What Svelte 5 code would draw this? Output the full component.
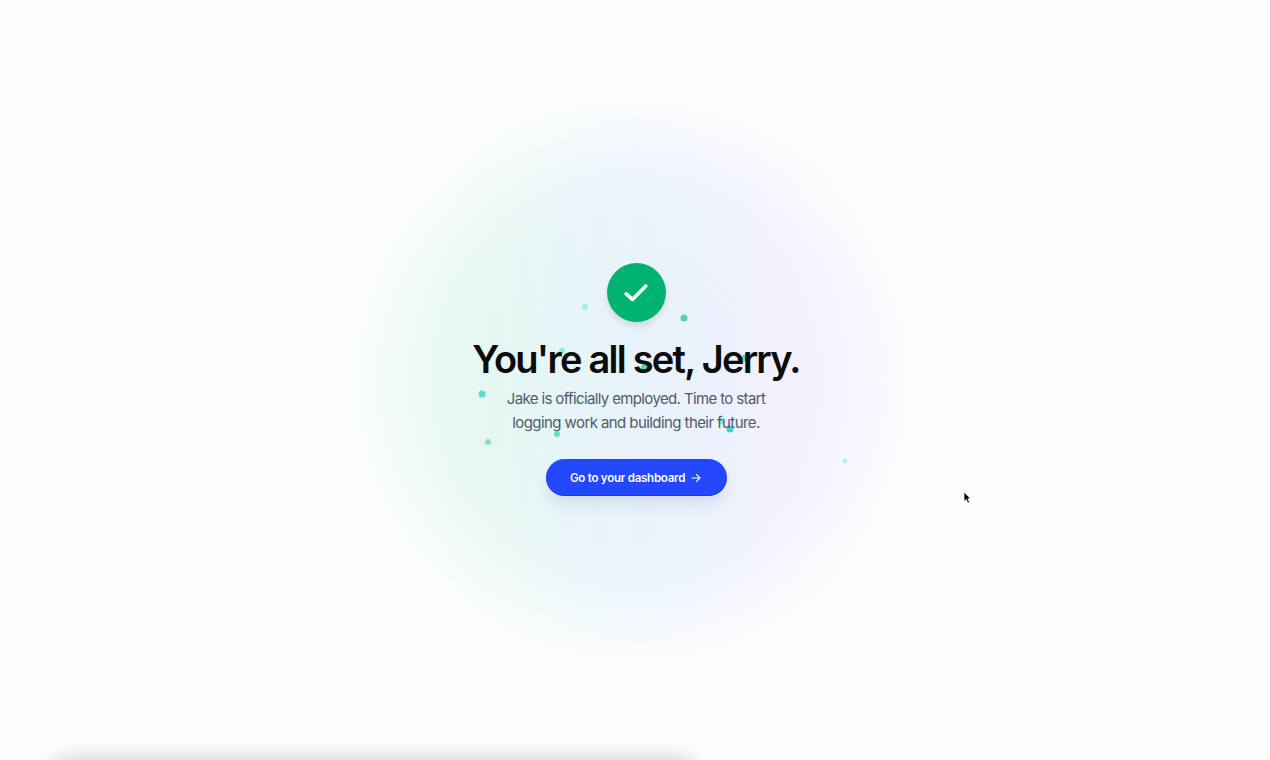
<script>
	let name = 'Jerry'
	let child = 'Jake'

	const confetti = [
		{ x: 584.5, y: 307, size: 6, color: '#a7f0da' },
		{ x: 683.5, y: 318, size: 7, color: '#4ad9a9' },
		{ x: 562, y: 350.5, size: 6, color: '#93e8dc' },
		{ x: 643.5, y: 367, size: 6, color: '#4fdcb6' },
		{ x: 745, y: 358, size: 7, color: '#5edbb8' },
		{ x: 481.5, y: 394, size: 7, color: '#55dfcf' },
		{ x: 577.5, y: 402, size: 5, color: '#a5efdf' },
		{ x: 556.5, y: 434, size: 6, color: '#6fe0bd' },
		{ x: 488, y: 441.5, size: 6, color: '#88dfc0' },
		{ x: 720.5, y: 421, size: 6, color: '#8fe3cf' },
		{ x: 729.5, y: 428.5, size: 7, color: '#3dd6c5' },
		{ x: 844.5, y: 461, size: 5, color: '#baf1e0' }
	]
</script>

<main>
	<div class="glow"></div>

	{#each confetti as dot}
		<span
			class="dot"
			style="left: {dot.x}px; top: {dot.y}px; width: {dot.size}px; height: {dot.size}px; background: {dot.color}"
		></span>
	{/each}

	<section>
		<div class="badge">
			<svg width="30" height="30" viewBox="0 0 30 30" fill="none">
				<path d="M5.2 15.8 L11.4 21.4 L24.8 8" stroke="#fff" stroke-width="3.6" stroke-linecap="round" stroke-linejoin="round" />
			</svg>
		</div>
		<h1>You're all set, {name}.</h1>
		<p>
			<span class="first">{child} is officially employed. Time to start</span>
			<span class="second">logging work and building their future.</span>
		</p>
		<button>
			<span>Go to your dashboard</span>
			<svg width="12" height="12" viewBox="0 0 12 12" fill="none" stroke="#fff" stroke-width="1.1" stroke-linecap="round" stroke-linejoin="round">
				<path d="M2 6 H10 M6.4 2.4 L10 6 L6.4 9.6" />
			</svg>
		</button>
	</section>

	<div class="sheet"></div>

	<svg class="cursor" width="10" height="14" viewBox="0 0 10 14">
		<path d="M1 1 V10.3 L3.2 8.4 L4.8 12.1 L6.5 11.4 L4.9 7.8 H7.6 Z" fill="#000" stroke="#fff" stroke-width="0.7" />
	</svg>
</main>

<style>
	:global(body) {
		margin: 0;
		background: #fefefe;
	}

	main {
		position: relative;
		display: flex;
		justify-content: center;
		align-items: center;
		box-sizing: border-box;
		height: 760px;
		padding: 0 0 1px 2px;
		overflow: hidden;
		font-family: Inter, "Liberation Sans", sans-serif;
	}

	.glow {
		position: absolute;
		left: 392px;
		top: 136px;
		width: 488px;
		height: 488px;
		border-radius: 50%;
		background: linear-gradient(90deg, #e3faeb 0%, #e8f2fc 50%, #f7f0fe 100%);
		filter: blur(48px);
	}

	.dot {
		position: absolute;
		border-radius: 50%;
		transform: translate(-50%, -50%);
	}

	section {
		position: relative;
		display: flex;
		flex-direction: column;
		align-items: center;
	}

	.badge {
		display: flex;
		justify-content: center;
		align-items: center;
		width: 59px;
		height: 59px;
		border-radius: 50%;
		background: #00b371;
		box-shadow: 0 5px 9px -2px rgba(0, 0, 0, 0.14);
	}

	h1 {
		margin: 13px 0 0;
		font-size: 38px;
		line-height: 48px;
		font-weight: 600;
		letter-spacing: -1.75px;
		white-space: nowrap;
		color: #0b0c0c;
	}

	p {
		display: flex;
		flex-direction: column;
		align-items: center;
		margin: 4px 0 0;
		font-size: 15px;
		line-height: 24px;
		letter-spacing: -0.63px;
		white-space: nowrap;
		color: #515b6c;
	}

	.second {
		letter-spacing: -0.58px;
	}

	button {
		display: flex;
		justify-content: center;
		align-items: center;
		gap: 5px;
		width: 181px;
		height: 37px;
		margin-top: 24px;
		padding: 0;
		border: 0;
		border-radius: 19px;
		background: #2348fb;
		box-shadow: inset 0 -1px 0 #1a36d8, 0 9px 16px -3px rgba(20, 30, 70, 0.12);
		color: #fff;
		font-family: inherit;
		font-size: 11.5px;
		font-weight: 600;
		letter-spacing: -0.24px;
	}

	button span {
		padding-top: 1px;
	}

	/* sheet waiting below the fold, only its shadow shows */
	.sheet {
		position: absolute;
		left: 56px;
		top: 762px;
		width: 636px;
		height: 60px;
		box-shadow: 0 0 24px rgba(0, 0, 0, 0.26);
	}

	.cursor {
		position: absolute;
		left: 963px;
		top: 491px;
	}
</style>
